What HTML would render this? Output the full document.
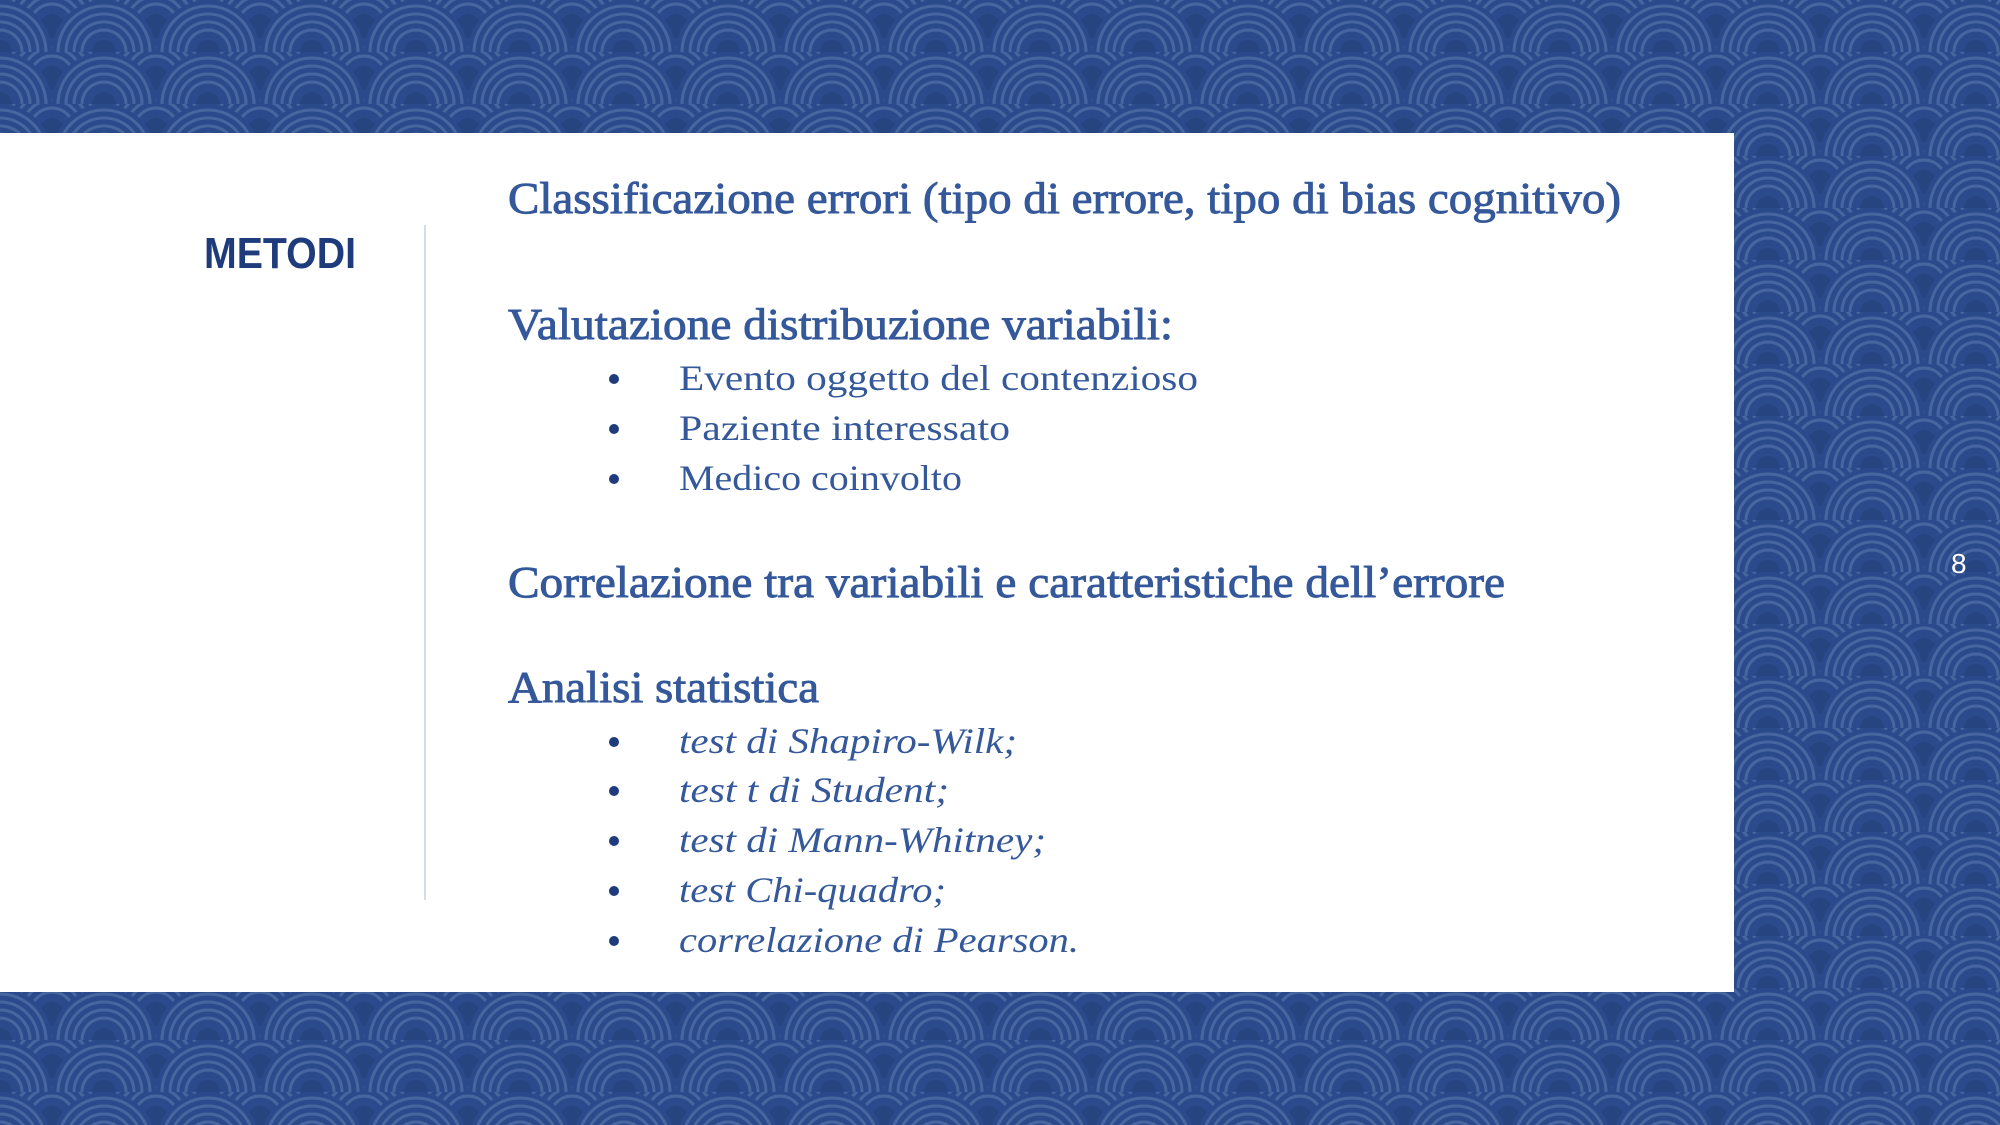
<!DOCTYPE html>
<html><head><meta charset="utf-8"><style>
html,body{margin:0;padding:0;width:2000px;height:1125px;overflow:hidden}
</style></head><body>
<svg width="2000" height="1125" xmlns="http://www.w3.org/2000/svg" style="display:block">
<defs>
<g id="s">
<circle r="52" fill="#2a4a8b"/>
<g fill="none" stroke="#47669f" stroke-width="3">
<circle r="46"/><circle r="38"/><circle r="30"/><circle r="22"/>
</g>
<circle r="12" fill="#26447f"/>
</g>
<pattern id="p" width="104" height="52" patternUnits="userSpaceOnUse">
<rect width="104" height="52" fill="#2a4a8b"/>
<use href="#s" x="0" y="0"/><use href="#s" x="104" y="0"/>
<use href="#s" x="52" y="26"/>
<use href="#s" x="0" y="52"/><use href="#s" x="104" y="52"/>
</pattern>
</defs>
<rect width="2000" height="1125" fill="url(#p)"/>
<rect x="0" y="133" width="1734" height="859" fill="#ffffff"/>
<rect x="424" y="225" width="2" height="675" fill="#d6dbe8"/>
<text x="204" y="268" font-family="Liberation Sans, sans-serif" font-weight="bold" font-size="44" fill="#1e3b7c" textLength="152" lengthAdjust="spacingAndGlyphs">METODI</text>
<g font-family="Liberation Serif, serif" fill="#34589a">
<g stroke="#34589a" stroke-width="0.9">
<text x="508" y="213" font-size="44" textLength="1113" lengthAdjust="spacingAndGlyphs">Classificazione errori (tipo di errore, tipo di bias cognitivo)</text>
<text x="508" y="339" font-size="44" textLength="665" lengthAdjust="spacingAndGlyphs">Valutazione distribuzione variabili:</text>
<text x="508" y="597" font-size="44" textLength="997" lengthAdjust="spacingAndGlyphs">Correlazione tra variabili e caratteristiche dell’errore</text>
<text x="508" y="702" font-size="44" textLength="311" lengthAdjust="spacingAndGlyphs">Analisi statistica</text>
</g>
<text x="679" y="390" font-size="36" textLength="519" lengthAdjust="spacingAndGlyphs">Evento oggetto del contenzioso</text>
<text x="679" y="440" font-size="36" textLength="331" lengthAdjust="spacingAndGlyphs">Paziente interessato</text>
<text x="679" y="490" font-size="36" textLength="283" lengthAdjust="spacingAndGlyphs">Medico coinvolto</text>
<g font-style="italic" font-size="36">
<text x="679" y="753" textLength="338" lengthAdjust="spacingAndGlyphs">test di Shapiro-Wilk;</text>
<text x="679" y="802" textLength="270" lengthAdjust="spacingAndGlyphs">test t di Student;</text>
<text x="679" y="852" textLength="367" lengthAdjust="spacingAndGlyphs">test di Mann-Whitney;</text>
<text x="679" y="902" textLength="267" lengthAdjust="spacingAndGlyphs">test Chi-quadro;</text>
<text x="679" y="952" textLength="400" lengthAdjust="spacingAndGlyphs">correlazione di Pearson.</text>
</g>
</g>
<g fill="#1e3b7c">
<circle cx="614" cy="379" r="5"/><circle cx="614" cy="429" r="5"/><circle cx="614" cy="479" r="5"/>
<circle cx="614" cy="742" r="5"/><circle cx="614" cy="791" r="5"/><circle cx="614" cy="841" r="5"/><circle cx="614" cy="891" r="5"/><circle cx="614" cy="941" r="5"/>
</g>
<text x="1951" y="573" font-family="Liberation Sans, sans-serif" font-size="28" fill="#ffffff">8</text>
</svg>
</body></html>
